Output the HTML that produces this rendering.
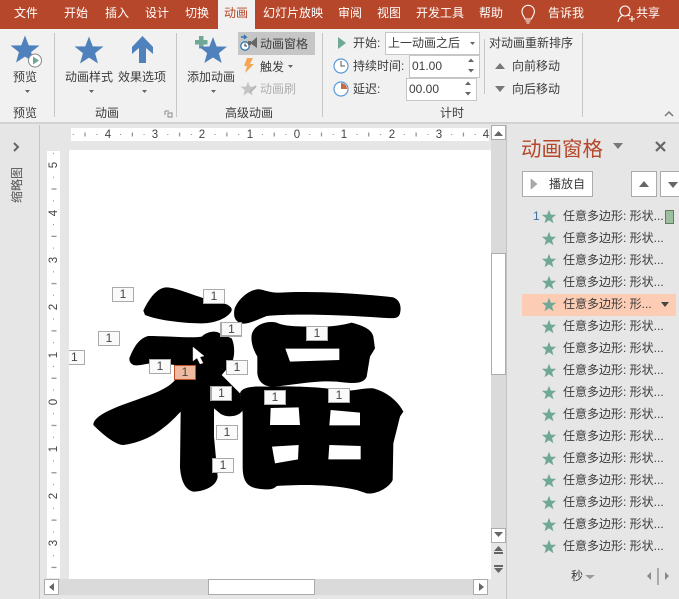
<!DOCTYPE html>
<html lang="zh">
<head>
<meta charset="utf-8">
<style>
html,body{margin:0;padding:0;width:679px;height:599px;overflow:hidden;background:#e6e6e6}
body{position:relative;font-family:"Liberation Sans","Noto Sans CJK SC",sans-serif;font-size:12px;color:#3c3c3c}
.t{position:absolute;white-space:nowrap;line-height:16px;height:16px}
.c{transform:translateX(-50%)}
.w{color:#fff}
.b{position:absolute;box-sizing:border-box}
svg{position:absolute;left:0;top:0}
.l{width:22px;height:15px;background:#fafafa;border:1px solid #aaa;box-sizing:border-box;position:absolute;text-align:center;font-size:12px;line-height:13px;color:#444}
.r{position:absolute;left:563px;white-space:nowrap;line-height:16px;color:#3c3c3c}
</style>
</head>
<body>
<div class="b" style="left:0;top:0;width:679px;height:29px;background:#b7472a"></div>
<div class="b" style="left:0;top:29px;width:679px;height:93px;background:#f1f1f1"></div>
<div class="b" style="left:0;top:122px;width:679px;height:2px;background:#d2d2d2"></div>
<div class="b" style="left:218px;top:0;width:37px;height:29px;background:#f1f1f1"></div>

<div class="t w c" style="left:26px;top:5px">文件</div>
<div class="t w c" style="left:76px;top:5px">开始</div>
<div class="t w c" style="left:117px;top:5px">插入</div>
<div class="t w c" style="left:157px;top:5px">设计</div>
<div class="t w c" style="left:197px;top:5px">切换</div>
<div class="t c" style="left:236px;top:5px;color:#b7472a">动画</div>
<div class="t w c" style="left:293px;top:5px">幻灯片放映</div>
<div class="t w c" style="left:350px;top:5px">审阅</div>
<div class="t w c" style="left:389px;top:5px">视图</div>
<div class="t w c" style="left:440px;top:5px">开发工具</div>
<div class="t w c" style="left:491px;top:5px">帮助</div>
<div class="t w c" style="left:566px;top:5px">告诉我</div>
<div class="t w c" style="left:648px;top:5px">共享</div>

<div class="b" style="left:238px;top:32px;width:77px;height:23px;background:#c6c6c6"></div>

<div class="t c" style="left:25px;top:69px">预览</div>
<div class="t c" style="left:89px;top:69px">动画样式</div>
<div class="t c" style="left:142px;top:69px">效果选项</div>
<div class="t c" style="left:211px;top:69px">添加动画</div>
<div class="t" style="left:260px;top:36px">动画窗格</div>
<div class="t" style="left:260px;top:59px">触发</div>
<div class="t" style="left:260px;top:81px;color:#b0b0b0">动画刷</div>
<div class="t c" style="left:25px;top:105px">预览</div>
<div class="t c" style="left:107px;top:105px">动画</div>
<div class="t c" style="left:249px;top:105px">高级动画</div>
<div class="t c" style="left:452px;top:105px">计时</div>

<div class="t" style="left:353px;top:35px">开始:</div>
<div class="t" style="left:353px;top:58px">持续时间:</div>
<div class="t" style="left:353px;top:81px">延迟:</div>
<div class="b" style="left:385px;top:32px;width:95px;height:23px;background:#fff;border:1px solid #c6c6c6"></div>
<div class="b" style="left:409px;top:55px;width:71px;height:23px;background:#fff;border:1px solid #c6c6c6"></div>
<div class="b" style="left:406px;top:78px;width:71px;height:23px;background:#fff;border:1px solid #c6c6c6"></div>
<div class="t" style="left:388px;top:35px">上一动画之后</div>
<div class="t" style="left:412px;top:58px">01.00</div>
<div class="t" style="left:409px;top:81px">00.00</div>
<div class="t" style="left:489px;top:35px">对动画重新排序</div>
<div class="t" style="left:512px;top:58px">向前移动</div>
<div class="t" style="left:512px;top:81px">向后移动</div>

<!-- rulers, slide, scrollbars -->
<div class="b" style="left:71px;top:128px;width:418px;height:13px;background:#fff"></div>
<div class="b" style="left:47px;top:151px;width:13px;height:427px;background:#fff"></div>
<div class="b" style="left:69px;top:150px;width:422px;height:429px;background:#fff"></div>
<div class="b" style="left:39px;top:125px;width:1px;height:474px;background:#c4c4c4"></div>
<div class="b" style="left:506px;top:125px;width:1px;height:474px;background:#c4c4c4"></div>

<div class="b" style="left:491px;top:125px;width:15px;height:418px;background:#dadada"></div>
<div class="b" style="left:491px;top:125px;width:15px;height:15px;background:#fff;border:1px solid #ababab"></div>
<div class="b" style="left:491px;top:253px;width:15px;height:122px;background:#fff;border:1px solid #ababab"></div>
<div class="b" style="left:491px;top:528px;width:15px;height:15px;background:#fff;border:1px solid #ababab"></div>
<div class="b" style="left:44px;top:579px;width:444px;height:16px;background:#dadada"></div>
<div class="b" style="left:44px;top:579px;width:15px;height:16px;background:#fff;border:1px solid #ababab"></div>
<div class="b" style="left:208px;top:579px;width:107px;height:16px;background:#fff;border:1px solid #ababab"></div>
<div class="b" style="left:473px;top:579px;width:15px;height:16px;background:#fff;border:1px solid #ababab"></div>

<!-- task pane -->
<div class="t" style="left:521px;top:136px;height:28px;line-height:28px;font-size:20.5px;color:#b7472a">动画窗格</div>
<div class="b" style="left:522px;top:171px;width:71px;height:26px;background:#fff;border:1px solid #ababab"></div>
<div class="b" style="left:631px;top:171px;width:26px;height:26px;background:#fff;border:1px solid #ababab"></div>
<div class="b" style="left:660px;top:171px;width:25px;height:26px;background:#fff;border:1px solid #ababab"></div>
<div class="t" style="left:549px;top:176px">播放自</div>
<div class="b" style="left:522px;top:294px;width:154px;height:22px;background:#fcccb4"></div>
<div class="b" style="left:665px;top:210px;width:9px;height:14px;background:#9dbf9d;border:1px solid #5f7f5f"></div>
<div class="t" style="left:533px;top:208px;color:#3f6f9f">1</div>

<div class="r" style="top:208px">任意多边形: 形状...</div>
<div class="r" style="top:230px">任意多边形: 形状...</div>
<div class="r" style="top:252px">任意多边形: 形状...</div>
<div class="r" style="top:274px">任意多边形: 形状...</div>
<div class="r" style="top:296px">任意多边形: 形...</div>
<div class="r" style="top:318px">任意多边形: 形状...</div>
<div class="r" style="top:340px">任意多边形: 形状...</div>
<div class="r" style="top:362px">任意多边形: 形状...</div>
<div class="r" style="top:384px">任意多边形: 形状...</div>
<div class="r" style="top:406px">任意多边形: 形状...</div>
<div class="r" style="top:428px">任意多边形: 形状...</div>
<div class="r" style="top:450px">任意多边形: 形状...</div>
<div class="r" style="top:472px">任意多边形: 形状...</div>
<div class="r" style="top:494px">任意多边形: 形状...</div>
<div class="r" style="top:516px">任意多边形: 形状...</div>
<div class="r" style="top:538px">任意多边形: 形状...</div>
<div class="t" style="left:571px;top:568px">秒</div>

<div class="t" style="left:17px;top:185px;transform:translate(-50%,-50%) rotate(-90deg);color:#555">缩略图</div>

<svg width="679" height="599" viewBox="0 0 679 599">
<defs>
<polygon id="s" points="0,-10 2.6,-3.2 10,-3.1 4.2,1.5 6.2,8.6 0,4.6 -6.2,8.6 -4.2,1.5 -10,-3.1 -2.6,-3.2"/>
<pattern id="px" x="14" y="128" width="47.3" height="13" patternUnits="userSpaceOnUse">
<rect x="23.2" y="4.5" width="1" height="4" fill="#777"/><rect x="11.4" y="6" width="1" height="1" fill="#888"/><rect x="35" y="6" width="1" height="1" fill="#888"/>
</pattern>
<pattern id="py" x="47" y="23.4" width="13" height="47.3" patternUnits="userSpaceOnUse">
<rect x="4.5" y="23.2" width="5" height="1" fill="#777"/><rect x="6" y="11.4" width="1" height="1" fill="#888"/><rect x="6" y="35" width="1" height="1" fill="#888"/>
</pattern>
</defs>

<!-- ribbon separators -->
<g fill="#c6c6c6">
<rect x="54" y="33" width="1" height="84"/><rect x="176" y="33" width="1" height="84"/><rect x="322" y="33" width="1" height="84"/><rect x="484" y="39" width="1" height="55"/><rect x="582" y="33" width="1" height="84"/>
</g>

<!-- ribbon big icons -->
<path d="M195 40h4v-4h4.500v4h4v4.500h-4v4h-4.500v-4h-4z" fill="#6fa897"/>
<g fill="#4f81bd">
<use href="#s" transform="translate(25,50) scale(1.45)"/>
<use href="#s" transform="translate(89,51) scale(1.45)"/>
<use href="#s" transform="translate(213,51) scale(1.4)"/>
<polygon points="142.500,36 153,47 153,54 146,48 146,63 139,63 139,48 132,54 132,47"/>
</g>
<circle cx="35" cy="60.500" r="6.500" fill="#fff" stroke="#888" stroke-width="1"/>
<polygon points="33,56.500 33,64.500 39,60.500" fill="#6fa78f"/>
<!-- animation pane icon -->
<circle cx="245" cy="46" r="4.200" fill="#fff" stroke="#2e75b6" stroke-width="1.300"/>
<path d="M245 43.500V46h2" stroke="#333" fill="none"/>
<path d="M241 37h5l-2-2M246 37l-2 2" stroke="#2e75b6" stroke-width="1.400" fill="none"/>
<polygon points="257,37 257,48 250,43" fill="#666"/><polygon points="248,41 251,41 251,45 248,45" fill="#666"/>
<!-- trigger bolt -->
<polygon points="247,58 253,58 250,64 254,64 245,73 247,66 244,66" fill="#f3a754"/>
<!-- brush -->
<use href="#s" fill="#c4c4c4" transform="translate(248,89) scale(.75)"/>
<path d="M250 92l6-6" stroke="#b5b5b5" stroke-width="2"/>

<!-- carets -->
<g fill="#666">
<polygon points="25,90 30,90 27.500,93"/><polygon points="89,90 94,90 91.500,93"/><polygon points="142,90 147,90 144.500,93"/><polygon points="211,90 216,90 213.500,93"/>
<polygon points="288,65 293,65 290.500,68"/><polygon points="470,42 475,42 472.500,45"/>
</g>
<polygon points="168,113 172,113 172,117 168,117" fill="none" stroke="#888"/>
<path d="M165 111h4M165 111v4" stroke="#888" fill="none"/>
<path d="M665 116l4-4 4 4" stroke="#777" stroke-width="1.500" fill="none"/>

<!-- timing icons -->
<polygon points="338,37 338,49 346,43" fill="#6fa897"/>
<circle cx="341" cy="66" r="7" fill="#fff" stroke="#5b9bd5" stroke-width="1.200"/>
<path d="M341 61v5h4" stroke="#555" fill="none"/>
<circle cx="341" cy="89" r="7" fill="#fff" stroke="#5b9bd5" stroke-width="1.200"/>
<path d="M341 89V83a6 6 0 0 1 6 6z" fill="#c96a45"/>
<g fill="#666">
<polygon points="468,62 474,62 471,58.500"/><polygon points="468,69 474,69 471,72.500"/>
<polygon points="465,85 471,85 468,81.500"/><polygon points="465,92 471,92 468,95.500"/>
</g>
<polygon points="495,69 505,69 500,63" fill="#777"/>
<polygon points="495,86 505,86 500,92" fill="#777"/>

<!-- title bar icons -->
<g fill="none" stroke="#fff" stroke-width="1.100">
<path d="M525 19c-.5-2-3-4-3-7.500a6.200 6.200 0 0 1 12.400 0c0 3.500-2.500 5.500-3 7.500zM525.500 21h5M526.500 23h3"/>
<circle cx="625" cy="11" r="5"/>
<path d="M618 22c.5-4 3-6 5-7M628 15l2 1M629 19h6M632 16v6"/>
</g>

<!-- rulers -->
<rect x="71" y="128" width="418" height="13" fill="url(#px)"/>
<rect x="47" y="151" width="13" height="427" fill="url(#py)"/>
<g font-family="Liberation Sans" font-size="11.500" fill="#444" text-anchor="middle">
<text x="108" y="138">4</text><text x="155" y="138">3</text><text x="202" y="138">2</text><text x="250" y="138">1</text><text x="297" y="138">0</text><text x="344" y="138">1</text><text x="392" y="138">2</text><text x="439" y="138">3</text><text x="486" y="138">4</text>
<text transform="translate(57,165) rotate(-90)">5</text><text transform="translate(57,213) rotate(-90)">4</text><text transform="translate(57,260) rotate(-90)">3</text><text transform="translate(57,307) rotate(-90)">2</text><text transform="translate(57,355) rotate(-90)">1</text><text transform="translate(57,402) rotate(-90)">0</text><text transform="translate(57,449) rotate(-90)">1</text><text transform="translate(57,496) rotate(-90)">2</text><text transform="translate(57,543) rotate(-90)">3</text>
</g>

<!-- scrollbar arrows -->
<g fill="#666">
<polygon points="494,136 503,136 498.500,131"/><polygon points="494,532 503,532 498.500,537"/>
<polygon points="494,551 503,551 498.500,546"/><rect x="494" y="552" width="9" height="2"/>
<polygon points="494,568 503,568 498.500,573"/><rect x="494" y="565" width="9" height="2"/>
<polygon points="54,583 54,591 49,587"/><polygon points="479,583 479,591 484,587"/>
<path d="M14 143l4 4-4 4" fill="none" stroke="#666" stroke-width="2"/>
</g>

<!-- task pane icons -->
<polygon points="613,143 623,143 618,149" fill="#777"/>
<path d="M656 142l9 9M665 142l-9 9" stroke="#666" stroke-width="2.200"/>
<polygon points="531,179 531,189 537,184" fill="#aaa" stroke="#888" stroke-width=".5"/>
<polygon points="639,187 649,187 644,181" fill="#666"/>
<polygon points="668,182 678,182 673,188" fill="#666"/>
<polygon points="661,302 669,302 665,307" fill="#444"/>
<polygon points="585,575 595,575 590,579" fill="#999"/>
<polygon points="651,572 651,580 647,576" fill="#888"/><polygon points="665,572 665,580 669,576" fill="#888"/>
<rect x="657" y="568" width="2" height="17" fill="#aaa"/>
<g fill="#6fa897">
<use href="#s" transform="translate(549,217) scale(.72)"/>
<use href="#s" transform="translate(549,239) scale(.72)"/>
<use href="#s" transform="translate(549,261) scale(.72)"/>
<use href="#s" transform="translate(549,283) scale(.72)"/>
<use href="#s" transform="translate(549,305) scale(.72)"/>
<use href="#s" transform="translate(549,327) scale(.72)"/>
<use href="#s" transform="translate(549,349) scale(.72)"/>
<use href="#s" transform="translate(549,371) scale(.72)"/>
<use href="#s" transform="translate(549,393) scale(.72)"/>
<use href="#s" transform="translate(549,415) scale(.72)"/>
<use href="#s" transform="translate(549,437) scale(.72)"/>
<use href="#s" transform="translate(549,459) scale(.72)"/>
<use href="#s" transform="translate(549,481) scale(.72)"/>
<use href="#s" transform="translate(549,503) scale(.72)"/>
<use href="#s" transform="translate(549,525) scale(.72)"/>
<use href="#s" transform="translate(549,547) scale(.72)"/>
</g>

<!-- 福 shape -->
<g transform="translate(60,270) scale(.33333)" fill="#000" fill-rule="evenodd">
<path d="M250 122C265 90 290 52 320 52C350 52 420 85 470 95C500 100 518 110 515 122C505 145 460 162 420 160C370 160 290 150 255 135Z"/>
<path d="M208 265C220 235 235 205 265 198C320 198 400 205 425 200C440 185 465 180 480 190L515 205C525 225 525 260 515 280L485 315L540 370L548 420C540 440 500 445 480 430L462 415L462 500L473 620C470 650 430 665 400 665C375 660 362 630 360 590L362 425C320 470 270 515 190 525C165 525 125 490 100 465C100 445 130 425 200 400C270 375 320 360 345 330L345 285L300 280C270 275 240 290 220 285C212 280 208 275 208 265Z"/>
<path d="M523 120C530 90 570 55 600 58C620 62 630 68 660 68C750 62 900 70 1000 82C1020 90 1025 110 1020 130C1015 148 1000 145 960 143C850 135 700 130 620 138C590 150 560 165 545 160C525 155 520 140 523 120Z"/>
<path d="M575 195C580 165 620 150 650 158C670 168 700 170 780 170C820 170 850 165 875 158C900 165 935 175 940 200L945 235L930 260L920 320C910 345 870 340 830 335C770 330 700 345 640 350C610 350 595 335 592 310L592 260C580 240 572 215 575 195ZM676 236L838 236L838 270L690 275Z"/>
<path d="M540 370C545 350 580 348 620 350C680 348 780 350 830 360C870 368 910 352 940 355C980 365 1015 395 1030 425L1020 440L1000 520L998 630C990 650 950 675 920 670L890 660C800 640 700 645 650 648C640 660 620 660 590 655C560 650 548 630 548 590L548 430ZM632 414L716 412L720 465L630 465ZM812 420L900 428L900 466L808 466ZM636 530L716 525L714 568L645 580ZM808 525L902 528L902 568L805 568Z"/>
</g>
<polygon points="193,347 193,361 197,358 200,364 203,363 200,357 204,356" fill="#fff" stroke="#ccc" stroke-width=".5"/>
</svg>

<!-- animation labels -->
<div class="l" style="left:112px;top:287px">1</div>
<div class="l" style="left:203px;top:289px">1</div>
<div class="l" style="left:220px;top:322px;border-bottom-width:2px;border-left-width:2px">1</div>
<div class="l" style="left:306px;top:326px">1</div>
<div class="l" style="left:98px;top:331px">1</div>
<div class="l" style="left:69px;top:350px;width:16px;border-left:0;text-align:left;padding-left:2px">1</div>
<div class="l" style="left:149px;top:359px">1</div>
<div class="l" style="left:226px;top:360px">1</div>
<div class="l" style="left:174px;top:365px;background:#eebba0;border-color:#c0502d">1</div>
<div class="l" style="left:210px;top:386px;border-left-width:2px">1</div>
<div class="l" style="left:264px;top:390px">1</div>
<div class="l" style="left:328px;top:388px">1</div>
<div class="l" style="left:216px;top:425px">1</div>
<div class="l" style="left:212px;top:458px">1</div>
</body>
</html>
